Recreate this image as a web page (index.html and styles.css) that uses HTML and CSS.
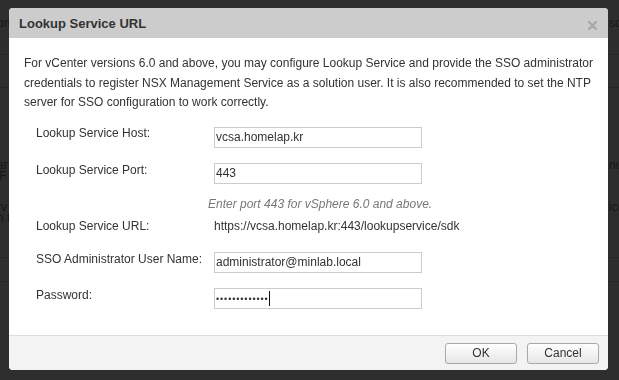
FILE: index.html
```html
<!DOCTYPE html>
<html lang="en">
<head>
  <meta charset="UTF-8">
  <meta name="viewport" content="width=device-width, initial-scale=1.0">
  <title>Lookup Service URL</title>
  <link rel="stylesheet" href="styles.css">
</head>
<body>
  <!-- page behind the modal -->
  <div class="page">
    <div class="pagerow r1"><span class="frag left">on</span><span class="frag right">so</span></div>
    <div class="pageline l1"></div>
    <div class="pageline l2"></div>
    <div class="pagerow r2"><span class="frag left">ar<br>'F</span><span class="frag right">nu</span></div>
    <div class="pagerow r4"><span class="frag left">rv<br>n t</span><span class="frag right">ice</span></div>
    <div class="pageline l3"></div>
    <div class="pageline l4"></div>
  </div>

  <div class="backdrop">
    <div class="modal">
      <div class="modal-head">
        <span class="modal-title">Lookup Service URL</span>
        <svg class="close" width="9" height="9" viewBox="0 0 9 9"><path d="M1 1L8 8M8 1L1 8" stroke="#a8a8a8" stroke-width="2.4" stroke-linecap="round"/></svg>
      </div>

      <div class="modal-body">
        <p class="intro">For vCenter versions 6.0 and above, you may configure Lookup Service and provide the SSO administrator credentials to register NSX Management Service as a solution user. It is also recommended to set the NTP server for SSO configuration to work correctly.</p>

        <div class="form">
          <div class="row r-host">
            <label>Lookup Service Host:</label>
            <input class="field" type="text" value="vcsa.homelap.kr">
          </div>
          <div class="row r-port">
            <label>Lookup Service Port:</label>
            <input class="field" type="text" value="443">
          </div>
          <div class="hint">Enter port 443 for vSphere 6.0 and above.</div>
          <div class="row r-url">
            <label>Lookup Service URL:</label>
            <span class="value">https://vcsa.homelap.kr:443/lookupservice/sdk</span>
          </div>
          <div class="row r-user">
            <label>SSO Administrator User Name:</label>
            <input class="field" type="text" value="administrator@minlab.local">
          </div>
          <div class="row r-pass">
            <label>Password:</label>
            <div class="field pass"><span class="dots">&bull;&bull;&bull;&bull;&bull;&bull;&bull;&bull;&bull;&bull;&bull;&bull;&bull;</span><span class="caret"></span></div>
          </div>
        </div>
      </div>

      <div class="modal-foot">
        <button class="btn">OK</button>
        <button class="btn">Cancel</button>
      </div>
    </div>
  </div>
</body>
</html>
```

FILE: styles.css
```css
*{
  margin:0;
  padding:0;
  box-sizing:border-box;
}
html,body{
  width:100%;
  height:100%;
  overflow:hidden;
}
body{
  font-family:"Liberation Sans", Arial, sans-serif;
  font-size:12px;
  color:#333;
  background:#2e2e2e;
}

/* page behind */
.page{
  width:100%;
  height:100%;
  padding-top:16px;
}
.pagerow{
  display:flex;
  height:22px;
  line-height:11px;
  font-size:12px;
  color:#161616;
}
.pagerow.r1{ height:14px; line-height:14px; }
.pagerow.r2{ margin-top:72px; }
.pagerow.r4{ margin-top:20px; }
.pageline{
  height:1px;
  background:#252525;
}
.pageline.l1{ margin-top:24px; }
.pageline.l2{ margin-top:32px; }
.pageline.l3{ margin-top:33px; }
.pageline.l4{ margin-top:23px; }
.frag{
  white-space:nowrap;
}
.frag.left{
  margin-left:-3px;
}
.frag.right{
  position:absolute;
  left:609px;
}

/* modal */
.backdrop{
  position:fixed;
  inset:0;
}
.modal{
  position:absolute;
  left:9px;
  top:8px;
  width:599px;
  height:362px;
  background:#fff;
  border-radius:4px;
  overflow:hidden;
  display:flex;
  flex-direction:column;
}
.modal-head{
  height:30px;
  background:#cccccc;
  display:flex;
  align-items:center;
  padding:0 11px 0 10px;
}
.modal-title{
  font-weight:bold;
  font-size:13px;
  color:#333;
}
.close{
  margin-left:auto;
  margin-top:4px;
}
.modal-body{
  flex:1;
  padding:16px 15px 0 15px;
}
.intro{
  line-height:19.5px;
  color:#333;
}
.form{
  padding-left:12px;
  margin-top:14px;
}
.row{
  display:flex;
  align-items:flex-start;
}
.row label{
  width:178px;
  line-height:15px;
  flex:none;
}
.field{
  width:208px;
  height:21px;
  border:1px solid #cccccc;
  font-family:"Liberation Sans", Arial, sans-serif;
  font-size:12px;
  color:#333;
  padding:0 1px;
  outline:none;
  background:#fff;
}
.r-host label{ margin-top:-1px; }
.r-port{ margin-top:15px; }
.hint{
  margin-top:12px;
  padding-left:172px;
  font-style:italic;
  color:#787878;
  line-height:16px;
}
.r-url{ margin-top:6px; }
.r-url label,.value{ line-height:16px; }
.r-user{ margin-top:18px; }
.r-pass{ margin-top:15px; }
.pass{
  display:flex;
  align-items:center;
}
.dots{
  font-size:9px;
  letter-spacing:0.9px;
  color:#333;
  margin-top:1px;
}
.caret{
  width:1px;
  height:15px;
  background:#111;
}

/* footer */
.modal-foot{
  height:35px;
  border-top:1px solid #dddddd;
  background:#f3f3f3;
  display:flex;
  justify-content:flex-end;
  align-items:center;
  gap:10px;
  padding-right:9px;
}
.btn{
  width:72px;
  height:21px;
  border:1px solid #a9a9a9;
  border-radius:3px;
  background:linear-gradient(#ffffff,#e6e6e6);
  font-family:"Liberation Sans", Arial, sans-serif;
  font-size:12px;
  color:#333;
}
```
